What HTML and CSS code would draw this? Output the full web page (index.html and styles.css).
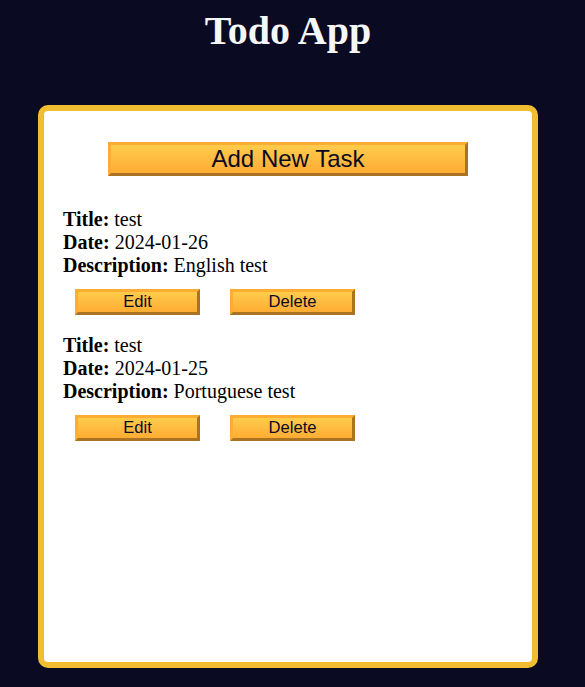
FILE: index.html
```html
<!DOCTYPE html>
<html lang="en">
<head>
<meta charset="utf-8">
<title>Todo App</title>
<link rel="stylesheet" href="styles.css">
</head>
<body>
<main>
  <h1>Todo App</h1>
  <div class="todo-app">
    <button class="btn large-btn" type="button">Add New Task</button>
    <div class="tasks-container">
      <div class="task">
        <p><strong>Title:</strong> test</p>
        <p><strong>Date:</strong> 2024-01-26</p>
        <p><strong>Description:</strong> English test</p>
        <div class="task-actions">
          <button class="btn" type="button">Edit</button>
          <button class="btn" type="button">Delete</button>
        </div>
      </div>
      <div class="task">
        <p><strong>Title:</strong> test</p>
        <p><strong>Date:</strong> 2024-01-25</p>
        <p><strong>Description:</strong> Portuguese test</p>
        <div class="task-actions">
          <button class="btn" type="button">Edit</button>
          <button class="btn" type="button">Delete</button>
        </div>
      </div>
    </div>
  </div>
</main>
</body>
</html>
```
FILE: styles.css
```css
* {
  box-sizing: border-box;
}

body {
  margin: 0;
  background-color: #0a0a23;
  font-family: "Liberation Serif", "Times New Roman", serif;
}

main {
  display: flex;
  flex-direction: column;
  align-items: center;
  padding-right: 9px;
}

h1 {
  color: #f5f6f7;
  font-size: 40px;
  line-height: 44px;
  font-weight: bold;
  margin: 9px 0 52px;
}

.todo-app {
  background-color: #fff;
  width: 500px;
  height: 563px;
  border: 6px solid #f1be32;
  border-radius: 10px;
  padding: 19px;
}

.btn {
  display: block;
  width: 125px;
  height: 26px;
  padding: 0;
  margin: 0;
  color: #0a0a23;
  font-family: "Liberation Sans", Arial, sans-serif;
  font-size: 16.6px;
  background-color: #feac32;
  background-image: linear-gradient(#fecc4c, #ffac33);
  border: 3px outset #feac32;
  cursor: pointer;
}

.large-btn {
  width: 360px;
  height: 34px;
  margin: 12px auto 0;
  font-size: 24px;
}

.tasks-container {
  margin-top: 32px;
}

.task {
  margin: 7px 0;
}

.task p {
  margin: 0;
  font-size: 20px;
  line-height: 23px;
  color: #000;
}

.task-actions {
  display: flex;
  gap: 30px;
  padding: 12px 0 12px 12px;
}
```
